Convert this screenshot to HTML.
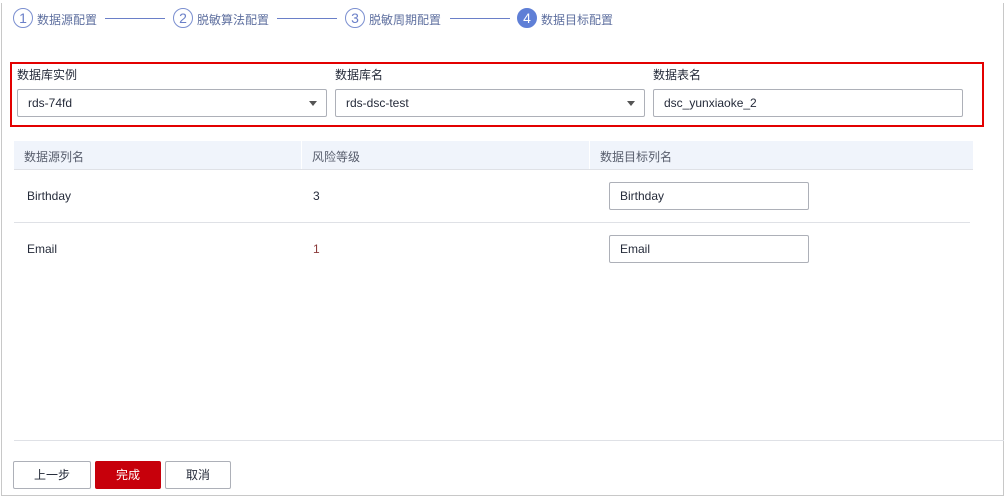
<!DOCTYPE html>
<html><head><meta charset="utf-8"><style>
*{box-sizing:border-box;margin:0;padding:0}
body{width:1006px;height:500px;background:#fff;font-family:"Liberation Sans","Noto Sans CJK SC",sans-serif;font-size:12px;color:#252b3a;position:relative;overflow:hidden}
.a{position:absolute}
.frame{left:1px;top:3px;width:1003px;height:493px;border:1px solid #c8c8c8;border-top:none}
.circ{width:20px;height:20px;border-radius:50%;border:1px solid #7b8fd0;color:#6a7fc8;font-size:14px;text-align:center;line-height:18px}
.st{color:#5e6f9f;font-size:12px;top:11px}
.ln{height:1px;background:#6a7fc8;top:18px}
.lab{font-size:12px;color:#252b3a}
.box{border:1px solid #adb0b8;border-radius:2px;height:28px;line-height:26px;padding-left:10px;font-size:12px}
.arr{right:9px;top:11px;width:0;height:0;border-left:4px solid transparent;border-right:4px solid transparent;border-top:5px solid #555}
.th{color:#575d6c}
.btn{top:461px;height:28px;border:1px solid #adb0b8;border-radius:2px;text-align:center;line-height:26px;font-size:12px}
</style></head><body>
<div class="a frame"></div>
<div class="a circ" style="left:13px;top:8px">1</div><div class="a st" style="left:37px">数据源配置</div>
<div class="a ln" style="left:105px;width:60px"></div>
<div class="a circ" style="left:173px;top:8px">2</div><div class="a st" style="left:197px">脱敏算法配置</div>
<div class="a ln" style="left:277px;width:60px"></div>
<div class="a circ" style="left:345px;top:8px">3</div><div class="a st" style="left:369px">脱敏周期配置</div>
<div class="a ln" style="left:450px;width:60px"></div>
<div class="a circ" style="left:517px;top:8px;background:#5f7fd6;border-color:#5f7fd6;color:#fff">4</div><div class="a st" style="left:541px">数据目标配置</div>

<div class="a" style="left:10px;top:62px;width:974px;height:65px;border:2px solid #e30000"></div>
<div class="a lab" style="left:17px;top:66px">数据库实例</div>
<div class="a lab" style="left:335px;top:66px">数据库名</div>
<div class="a lab" style="left:653px;top:66px">数据表名</div>
<div class="a box" style="left:17px;top:89px;width:310px">rds-74fd<div class="a arr"></div></div>
<div class="a box" style="left:335px;top:89px;width:310px">rds-dsc-test<div class="a arr"></div></div>
<div class="a box" style="left:653px;top:89px;width:310px">dsc_yunxiaoke_2</div>

<div class="a" style="left:14px;top:141px;width:959px;height:29px;background:#f0f4fb;border-bottom:1px solid #dfe1e6"></div>
<div class="a" style="left:301px;top:141px;width:1px;height:28px;background:#fff"></div>
<div class="a" style="left:589px;top:141px;width:1px;height:28px;background:#fff"></div>
<div class="a th" style="left:24px;top:148px">数据源列名</div>
<div class="a th" style="left:312px;top:148px">风险等级</div>
<div class="a th" style="left:600px;top:148px">数据目标列名</div>
<div class="a" style="left:27px;top:189px">Birthday</div>
<div class="a" style="left:313px;top:189px">3</div>
<div class="a box" style="left:609px;top:182px;width:200px">Birthday</div>
<div class="a" style="left:14px;top:222px;width:956px;height:1px;background:#dfe1e6"></div>
<div class="a" style="left:27px;top:242px">Email</div>
<div class="a" style="left:313px;top:242px;color:#8a3a3a">1</div>
<div class="a box" style="left:609px;top:235px;width:200px">Email</div>

<div class="a" style="left:14px;top:440px;width:990px;height:1px;background:#dfe1e6"></div>
<div class="a btn" style="left:13px;width:78px">上一步</div>
<div class="a btn" style="left:95px;width:66px;background:#c7000b;border-color:#c7000b;color:#fff">完成</div>
<div class="a btn" style="left:165px;width:66px">取消</div>
</body></html>
